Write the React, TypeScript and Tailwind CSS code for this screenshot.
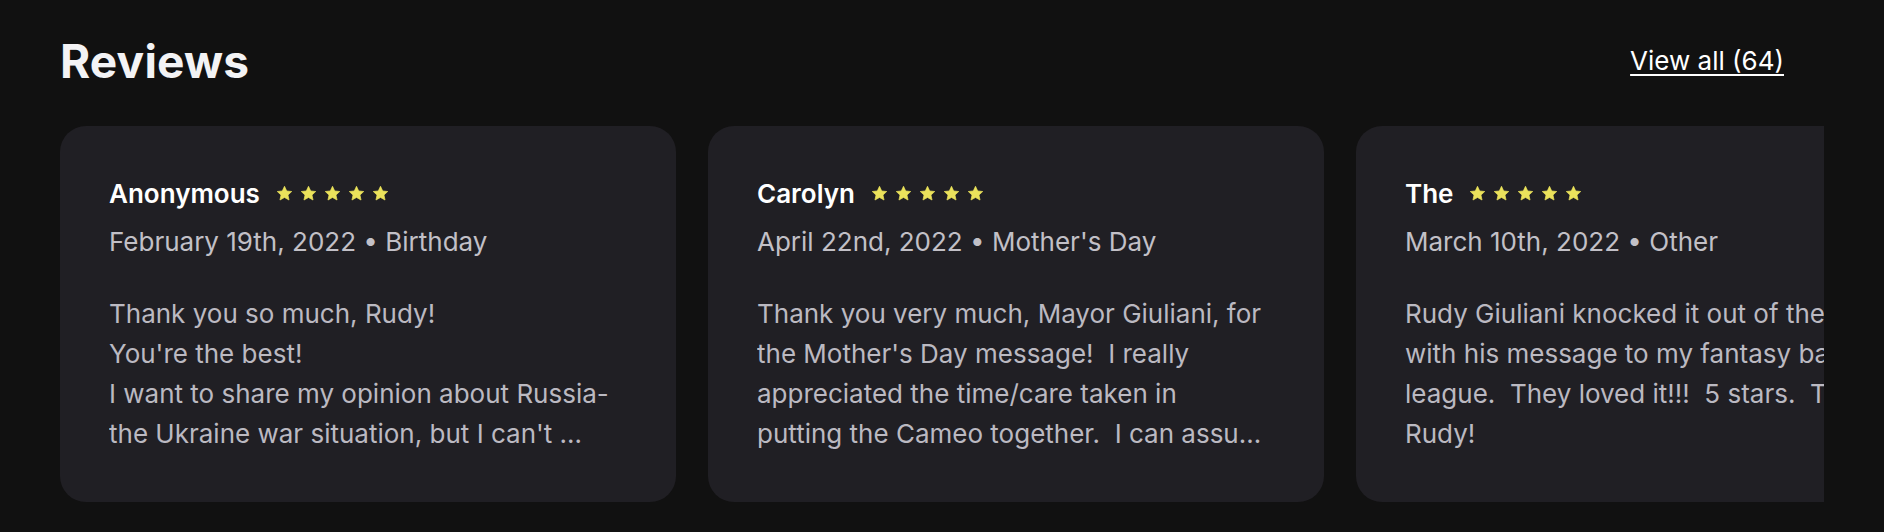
import React from "react";

type Review = { name: string; date: string; occasion: string; text: string };

const reviews: Review[] = [
  {
    name: "Anonymous",
    date: "February 19th, 2022",
    occasion: "Birthday",
    text: "Thank you so much, Rudy!\nYou're the best!\nI want to share my opinion about Russia-the Ukraine war situation, but I can't express it here in a review, so I will just say thank you again.",
  },
  {
    name: "Carolyn",
    date: "April 22nd, 2022",
    occasion: "Mother's Day",
    text: "Thank you very much, Mayor Giuliani, for the Mother's Day message!  I really appreciated the time/care taken in putting the Cameo together.  I can assure you my mother loved every minute of it.",
  },
  {
    name: "The",
    date: "March 10th, 2022",
    occasion: "Other",
    text: "Rudy Giuliani knocked it out of the park with his message to my fantasy baseball league.  They loved it!!!  5 stars.  Thanks Rudy!",
  },
];

function Star() {
  return (
    <svg width="17" height="17" viewBox="0 0 24 24" aria-hidden="true">
      <path
        d="M12 1.8l3.1 6.6 7.1.8-5.3 4.9 1.5 7.1L12 17.6l-6.4 3.6 1.5-7.1-5.3-4.9 7.1-.8z"
        fill="#ebe25b"
        stroke="#ebe25b"
        strokeWidth="1"
        strokeLinejoin="round"
      />
    </svg>
  );
}

function Card({ r }: { r: Review }) {
  return (
    <div className="w-[616px] shrink-0 rounded-[26px] bg-[#201f24] px-[49px] pt-[48px] pb-[48px]">
      <div className="flex items-center h-[40px]">
        <span className="text-[26px] leading-[40px] font-semibold text-white">{r.name}</span>
        <div className="ml-[16px] flex items-center gap-[7px] -mt-[2px]">
          <Star />
          <Star />
          <Star />
          <Star />
          <Star />
        </div>
      </div>
      <div className="mt-[8px] text-[26px] leading-[40px] text-[#c2c0c7] whitespace-nowrap">
        {r.date} • {r.occasion}
      </div>
      <p className="mt-[32px] text-[26px] leading-[40px] text-[#bbb9c1] whitespace-pre-wrap line-clamp-4 w-[508px]">
        {r.text}
      </p>
    </div>
  );
}

export default function App() {
  return (
    <div
      className="min-h-[532px] w-full bg-[#111111] px-[60px] pt-[33px]"
      style={{ fontFamily: "Inter, 'Liberation Sans', sans-serif" }}
    >
      <div className="flex items-center justify-between">
        <h2 className="text-[46px] leading-[56px] font-bold text-[#f3f3f5] tracking-[0.2px]">Reviews</h2>
        <a href="#" className="mr-[40px] text-[26px] leading-[32px] text-white underline underline-offset-[4px] decoration-[1.5px]">
          View all (64)
        </a>
      </div>
      <div className="mt-[37px] flex gap-[32px] overflow-hidden">
        {reviews.map((r) => (
          <Card key={r.name} r={r} />
        ))}
      </div>
    </div>
  );
}
